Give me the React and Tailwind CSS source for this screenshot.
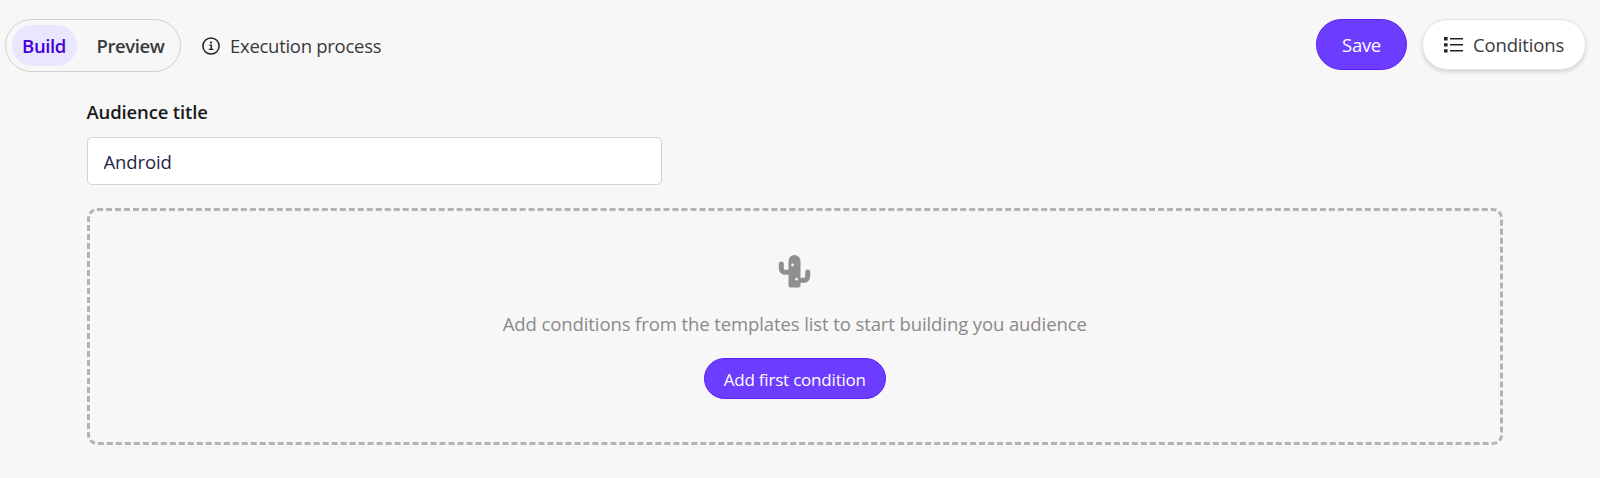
import React, { useState } from "react";

const InfoIcon = () => (
	<svg width="18" height="18" viewBox="0 0 18 18" fill="none" stroke="#222">
		<circle cx="9" cy="9" r="8.1" strokeWidth="1.5" />
		<path d="M7.3 8.1h2v4.2M6.8 12.4h4.6" strokeWidth="1.4" />
		<circle cx="9" cy="5.5" r="1.1" fill="#222" stroke="none" />
	</svg>
);

const ListIcon = () => (
	<svg width="19" height="16" viewBox="0 0 19 16" fill="#1f2328">
		<path d="M0 0h3.6v3.4H0zM0 6.2h3.6v3.4H0zM0 12.2h3.6v3.4H0z" />
		<path d="M6 1h13v1.4H6zM6 7.1h13v1.4H6zM6 13.1h13v1.4H6z" />
	</svg>
);

const CactusIcon = () => (
	<svg width="33" height="33" viewBox="0 0 33 33">
		<g fill="none" stroke="#8f8f8f" strokeWidth="5">
			<path
				d="M3.3 9v4.5a3.8 3.8 0 0 0 3.8 3.8H13M29.7 17v4.5a3.8 3.8 0 0 1-3.8 3.8H20"
				strokeLinecap="round"
			/>
		</g>
		<path
			d="M10.5 6a6 6 0 0 1 12 0v24.5a2 2 0 0 1-2 2h-8a2 2 0 0 1-2-2z"
			fill="#8f8f8f"
		/>
		<circle cx="14.6" cy="10" r="1.4" fill="#f7f7f7" />
		<circle cx="18.6" cy="24.2" r="1.4" fill="#f7f7f7" />
	</svg>
);

const tabs = [
	{ id: "build", label: "Build", className: "w-[65px]" },
	{ id: "preview", label: "Preview", className: "ml-[10px] w-[88px]" },
];

export default function App() {
	const [activeTab, setActiveTab] = useState("build");
	const [title, setTitle] = useState("Android");

	return (
		<div className="h-[478px] bg-[#f7f7f7] font-['Open_Sans','Noto_Sans',sans-serif] text-[18.5px] text-[#3a3a3a]">
			<header className="flex items-start justify-between pt-[19px] pr-[14px] pl-[5px]">
				<div className="flex items-center">
					<div className="flex h-[53px] w-[176px] items-center rounded-full border border-[#d0d0d0] pl-[5.5px]">
						{tabs.map((tab) => (
							<button
								key={tab.id}
								onClick={() => setActiveTab(tab.id)}
								className={`h-[41px] rounded-full font-semibold tracking-[-0.4px] ${tab.className} ${activeTab === tab.id ? "bg-[#ebe6ff] text-[#4200db]" : "text-[#3a3a3a]"}`}>
								{tab.label}
							</button>
						))}
					</div>
					<button className="mt-px ml-[21px] flex items-center">
						<InfoIcon />
						<span className="ml-[10px] tracking-[-0.28px] whitespace-nowrap">
							Execution process
						</span>
					</button>
				</div>
				<div className="flex gap-[15px]">
					<button className="h-[51px] w-[91px] rounded-full border border-[#5f1df5] bg-[#6c3cff] tracking-[-0.3px] text-white">
						Save
					</button>
					<button className="flex h-[51px] w-[164px] items-center rounded-full border border-[#e4e4e4] bg-white pl-[21px] shadow-[0_2px_4px_rgba(0,0,0,0.15)]">
						<ListIcon />
						<span className="ml-[10px] tracking-[-0.15px]">Conditions</span>
					</button>
				</div>
			</header>

			<main className="mr-[97px] ml-[86.5px] pt-[26px]">
				<label
					htmlFor="audience-title"
					className="block h-[28px] leading-[28px] font-semibold tracking-[-0.15px] whitespace-nowrap text-[#1a1a1a]">
					Audience title
				</label>
				<input
					id="audience-title"
					value={title}
					onChange={(e) => setTitle(e.target.value)}
					className="mt-[11px] block h-[48px] w-[575px] rounded-[5px] border border-[#d4d4d4] bg-white px-[16px] tracking-[-0.1px] text-[#25254a] outline-none"
				/>
				<section className="mt-[23px] flex h-[237px] flex-col items-center rounded-[10px] border-3 border-dashed border-[#b3b3b3] pt-[44px]">
					<CactusIcon />
					<p className="mt-[22px] h-[28px] leading-[28px] tracking-[-0.1px] whitespace-nowrap text-[#8a8a8a]">
						Add conditions from the templates list to start building you audience
					</p>
					<button className="mt-[20px] h-[41px] w-[182px] rounded-full border border-[#5f1df5] bg-[#6c3cff] pt-[2px] text-[17px] tracking-[-0.2px] whitespace-nowrap text-white">
						Add first condition
					</button>
				</section>
			</main>
		</div>
	);
}
